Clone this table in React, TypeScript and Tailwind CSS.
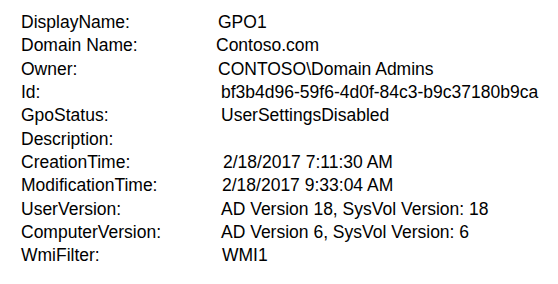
import React from "react";

const rows: { label: string; value: string; ml: string }[] = [
  { label: "DisplayName:", value: "GPO1", ml: "ml-[2px]" },
  { label: "Domain Name:", value: "Contoso.com", ml: "ml-0" },
  { label: "Owner:", value: "CONTOSO\\Domain Admins", ml: "ml-[2px]" },
  { label: "Id:", value: "bf3b4d96-59f6-4d0f-84c3-b9c37180b9ca", ml: "ml-[5px]" },
  { label: "GpoStatus:", value: "UserSettingsDisabled", ml: "ml-[5px]" },
  { label: "Description:", value: "", ml: "ml-0" },
  { label: "CreationTime:", value: "2/18/2017 7:11:30 AM", ml: "ml-[7px]" },
  { label: "ModificationTime:", value: "2/18/2017 9:33:04 AM", ml: "ml-[6px]" },
  { label: "UserVersion:", value: "AD Version 18, SysVol Version: 18", ml: "ml-[5px]" },
  { label: "ComputerVersion:", value: "AD Version 6, SysVol Version: 6", ml: "ml-[5px]" },
  { label: "WmiFilter:", value: "WMI1", ml: "ml-[6px]" },
];

export default function App() {
  return (
    <div className="w-[558px] h-[284px] bg-white text-black overflow-hidden pt-[11px] pl-[21px] font-['Liberation_Sans',Arial,sans-serif] text-[17.5px] leading-[23.33px]">
      {rows.map((r) => (
        <div key={r.label} className="flex h-[23.33px] whitespace-nowrap">
          <div className="w-[195px] shrink-0">{r.label}</div>
          <div className={r.ml}>{r.value}</div>
        </div>
      ))}
    </div>
  );
}
